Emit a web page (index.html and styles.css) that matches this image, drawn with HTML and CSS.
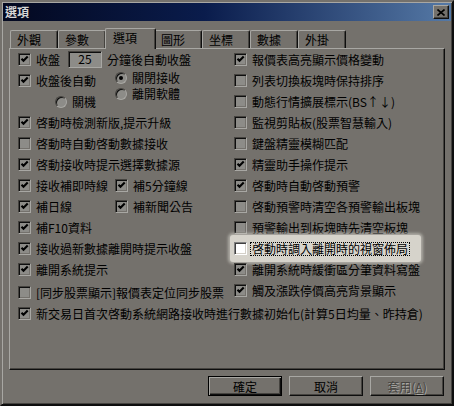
FILE: index.html
```html
<!DOCTYPE html>
<html lang="zh-Hant">
<head>
  <meta charset="UTF-8">
  <title>選項</title>
  <link rel="stylesheet" href="styles.css">
</head>
<body>
<div class="window">
  <div class="titlebar">
    <span class="title">選項</span>
    <span class="close">
      <svg width="8" height="7" viewBox="0 0 8 7"><path d="M0.5 0.5l7 6M7.5 0.5l-7 6" stroke="#000" stroke-width="1.6"/></svg>
    </span>
  </div>

  <div class="tabs">
    <div class="tab">外觀</div>
    <div class="tab">參數</div>
    <div class="tab active">選項</div>
    <div class="tab">圖形</div>
    <div class="tab">坐標</div>
    <div class="tab">數據</div>
    <div class="tab">外掛</div>
  </div>

  <div class="panel">
    <div class="columns">
      <div class="column">
        <div class="row">
          <span class="opt"><span class="cb on"><svg width="9" height="9" viewBox="0 0 9 9"><path d="M1.5 3.8l2 2 4.2-4.2" fill="none" stroke="#000" stroke-width="2.1"/></svg></span>收盤</span>
          <span class="edit">25</span>
          <span class="after-edit">分鐘後自動收盤</span>
        </div>
        <div class="group">
          <div class="group-left">
            <div class="row"><span class="opt"><span class="cb on"><svg width="9" height="9" viewBox="0 0 9 9"><path d="M1.5 3.8l2 2 4.2-4.2" fill="none" stroke="#000" stroke-width="2.1"/></svg></span>收盤後自動</span></div>
            <div class="row indent"><span class="opt"><span class="radio"></span>關機</span></div>
          </div>
          <div class="group-right">
            <div class="radio-row"><span class="opt"><span class="radio on"></span>關閉接收</span></div>
            <div class="radio-row"><span class="opt"><span class="radio"></span>離開軟體</span></div>
          </div>
        </div>
        <div class="row"><span class="opt"><span class="cb on"><svg width="9" height="9" viewBox="0 0 9 9"><path d="M1.5 3.8l2 2 4.2-4.2" fill="none" stroke="#000" stroke-width="2.1"/></svg></span>啓動時檢測新版,提示升級</span></div>
        <div class="row"><span class="opt"><span class="cb"></span>啓動時自動啓動數據接收</span></div>
        <div class="row"><span class="opt"><span class="cb on"><svg width="9" height="9" viewBox="0 0 9 9"><path d="M1.5 3.8l2 2 4.2-4.2" fill="none" stroke="#000" stroke-width="2.1"/></svg></span>啓動接收時提示選擇數據源</span></div>
        <div class="row">
          <span class="opt half"><span class="cb on"><svg width="9" height="9" viewBox="0 0 9 9"><path d="M1.5 3.8l2 2 4.2-4.2" fill="none" stroke="#000" stroke-width="2.1"/></svg></span>接收補即時線</span>
          <span class="opt"><span class="cb on"><svg width="9" height="9" viewBox="0 0 9 9"><path d="M1.5 3.8l2 2 4.2-4.2" fill="none" stroke="#000" stroke-width="2.1"/></svg></span>補5分鐘線</span>
        </div>
        <div class="row">
          <span class="opt half"><span class="cb on"><svg width="9" height="9" viewBox="0 0 9 9"><path d="M1.5 3.8l2 2 4.2-4.2" fill="none" stroke="#000" stroke-width="2.1"/></svg></span>補日線</span>
          <span class="opt"><span class="cb on"><svg width="9" height="9" viewBox="0 0 9 9"><path d="M1.5 3.8l2 2 4.2-4.2" fill="none" stroke="#000" stroke-width="2.1"/></svg></span>補新聞公告</span>
        </div>
        <div class="row"><span class="opt"><span class="cb on"><svg width="9" height="9" viewBox="0 0 9 9"><path d="M1.5 3.8l2 2 4.2-4.2" fill="none" stroke="#000" stroke-width="2.1"/></svg></span>補F10資料</span></div>
        <div class="row"><span class="opt"><span class="cb on"><svg width="9" height="9" viewBox="0 0 9 9"><path d="M1.5 3.8l2 2 4.2-4.2" fill="none" stroke="#000" stroke-width="2.1"/></svg></span>接收過新數據離開時提示收盤</span></div>
        <div class="row"><span class="opt"><span class="cb on"><svg width="9" height="9" viewBox="0 0 9 9"><path d="M1.5 3.8l2 2 4.2-4.2" fill="none" stroke="#000" stroke-width="2.1"/></svg></span>離開系統提示</span></div>
        <div class="row lower"><span class="opt"><span class="cb"></span>[同步股票顯示]報價表定位同步股票</span></div>
      </div>

      <div class="column">
        <div class="row"><span class="opt"><span class="cb on"><svg width="9" height="9" viewBox="0 0 9 9"><path d="M1.5 3.8l2 2 4.2-4.2" fill="none" stroke="#000" stroke-width="2.1"/></svg></span>報價表高亮顯示價格變動</span></div>
        <div class="row"><span class="opt"><span class="cb"></span>列表切換板塊時保持排序</span></div>
        <div class="row"><span class="opt"><span class="cb"></span>動態行情擴展標示(BS↑↓)</span></div>
        <div class="row"><span class="opt"><span class="cb"></span>監視剪貼板(股票智慧輸入)</span></div>
        <div class="row"><span class="opt"><span class="cb"></span>鍵盤精靈模糊匹配</span></div>
        <div class="row"><span class="opt"><span class="cb on"><svg width="9" height="9" viewBox="0 0 9 9"><path d="M1.5 3.8l2 2 4.2-4.2" fill="none" stroke="#000" stroke-width="2.1"/></svg></span>精靈助手操作提示</span></div>
        <div class="row"><span class="opt"><span class="cb on"><svg width="9" height="9" viewBox="0 0 9 9"><path d="M1.5 3.8l2 2 4.2-4.2" fill="none" stroke="#000" stroke-width="2.1"/></svg></span>啓動時自動啓動預警</span></div>
        <div class="row"><span class="opt"><span class="cb"></span>啓動預警時清空各預警輸出板塊</span></div>
        <div class="row"><span class="opt"><span class="cb"></span>預警輸出到板塊時先清空板塊</span></div>
        <div class="row"><span class="opt spot"><span class="cb lit"></span><span class="focus">啓動時調入離開時的視窗佈局</span></span></div>
        <div class="row"><span class="opt"><span class="cb on"><svg width="9" height="9" viewBox="0 0 9 9"><path d="M1.5 3.8l2 2 4.2-4.2" fill="none" stroke="#000" stroke-width="2.1"/></svg></span>離開系統時緩衝區分筆資料寫盤</span></div>
        <div class="row"><span class="opt"><span class="cb on"><svg width="9" height="9" viewBox="0 0 9 9"><path d="M1.5 3.8l2 2 4.2-4.2" fill="none" stroke="#000" stroke-width="2.1"/></svg></span>觸及漲跌停價高亮背景顯示</span></div>
      </div>
    </div>
    <div class="row"><span class="opt"><span class="cb on"><svg width="9" height="9" viewBox="0 0 9 9"><path d="M1.5 3.8l2 2 4.2-4.2" fill="none" stroke="#000" stroke-width="2.1"/></svg></span>新交易日首次啓動系統網路接收時進行數據初始化(計算5日均量、昨持倉)</span></div>
  </div>

  <div class="buttons">
    <button class="btn default">確定</button>
    <button class="btn">取消</button>
    <button class="btn" disabled>套用(<u>A</u>)</button>
  </div>
</div>
</body>
</html>
```

FILE: styles.css
```css
:root {
  --face: #74716c;
  --light: #a8a7a3;
  --shadow: #45433f;
  --dark: #0e0e0e;
  --well: #8d8c88;
  --spot: #d6d3cb;
}

* {
  margin: 0;
  padding: 0;
  box-sizing: border-box;
}

body {
  background: var(--face);
  font-family: "Noto Sans CJK TC", "Noto Sans", sans-serif;
  font-size: 12px;
  line-height: 14px;
  color: #000;
}

.window {
  width: 454px;
  height: 406px;
  background: var(--face);
  border: 2px solid;
  border-color: var(--face) var(--dark) var(--dark) var(--face);
  box-shadow: inset 1px 1px 0 var(--light), inset -1px -1px 0 var(--shadow);
  padding: 1px;
}

/* title bar */
.titlebar {
  height: 18px;
  display: flex;
  align-items: flex-start;
  justify-content: space-between;
  background: linear-gradient(to right, #03081f, #0a1c4c 45%, #5579a6);
  padding: 0 2px;
}

.title {
  color: #d6d6d6;
  font-weight: 700;
  font-size: 12px;
  line-height: 18px;
}

.close {
  width: 16px;
  height: 14px;
  margin-top: 2px;
  background: var(--face);
  border: 1px solid;
  border-color: var(--light) var(--dark) var(--dark) var(--light);
  box-shadow: inset -1px -1px 0 var(--shadow);
  display: flex;
  align-items: center;
  justify-content: center;
}

/* tabs */
.tabs {
  display: flex;
  align-items: flex-end;
  height: 20px;
  margin: 7px 6px 0;
  padding-left: 1px;
}

.tab {
  width: 48px;
  height: 18px;
  padding-left: 6px;
  line-height: 17px;
  border-left: 1px solid var(--light);
  border-top: 1px solid var(--light);
  border-right: 1px solid var(--dark);
  border-radius: 2px 2px 0 0;
  box-shadow: inset -1px 0 0 var(--shadow);
  background: var(--face);
}

.tab.active {
  width: 51px;
  height: 21px;
  margin: 0 -2px -1px -1px;
  padding-left: 7px;
  position: relative;
  z-index: 1;
}

/* page */
.panel {
  height: 322px;
  margin: 0 6px;
  padding: 1px 0 0 8px;
  border: 1px solid;
  border-color: var(--light) var(--dark) var(--dark) var(--light);
  box-shadow: inset -1px -1px 0 var(--shadow);
}

.columns {
  display: grid;
  grid-template-columns: 216px 1fr;
}

.row {
  display: flex;
  align-items: center;
  height: 21px;
  padding-bottom: 2px;
  white-space: nowrap;
}

.row.lower {
  margin-top: 2px;
}

.row.indent {
  padding-left: 37px;
}

.opt {
  display: flex;
  align-items: center;
  gap: 5px;
}

.opt.half {
  width: 97px;
}

.group {
  display: flex;
}

.group-left {
  width: 97px;
}

.group-right {
  margin-top: -1px;
}

.radio-row {
  height: 16px;
  display: flex;
  align-items: center;
}

/* controls */
.cb {
  width: 13px;
  height: 13px;
  flex: none;
  background: var(--well);
  border: 1px solid;
  border-color: var(--shadow) var(--light) var(--light) var(--shadow);
  box-shadow: inset 1px 1px 0 var(--dark), inset -1px -1px 0 var(--face);
  display: flex;
  align-items: center;
  justify-content: center;
}

.cb svg {
  display: block;
}

.cb.lit {
  background: #fff;
  border-color: #808080 #fff #fff #808080;
  box-shadow: inset 1px 1px 0 #404040, inset -1px -1px 0 #d4d0c8;
}

.radio {
  width: 12px;
  height: 12px;
  flex: none;
  border-radius: 50%;
  background: var(--well);
  border: 1px solid;
  border-color: var(--shadow) var(--light) var(--light) var(--shadow);
  box-shadow: inset 1px 1px 0 var(--dark);
  display: flex;
  align-items: center;
  justify-content: center;
}

.radio.on::after {
  content: "";
  width: 4px;
  height: 4px;
  border-radius: 50%;
  background: #000;
}

.edit {
  width: 34px;
  height: 17px;
  margin-left: 8px;
  margin-right: 5px;
  text-align: center;
  line-height: 14px;
  background: var(--well);
  border: 1px solid;
  border-color: var(--shadow) var(--light) var(--light) var(--shadow);
  box-shadow: inset 1px 1px 0 var(--dark);
}

/* spotlight on the focused option */
.spot {
  gap: 3px;
  background: var(--spot);
  padding: 7px 11px 6px 4px;
  margin: -7px -11px -6px -4px;
  border-radius: 3px;
  box-shadow: 0 0 3px 2px rgba(214, 211, 203, 0.6);
}

.focus {
  border: 1px dotted #000;
  padding: 0 1px;
  line-height: 12px;
}

/* buttons */
.buttons {
  display: flex;
  justify-content: flex-end;
  gap: 7px;
  margin: 6px 7px 0 0;
}

.btn {
  width: 74px;
  height: 20px;
  font-family: inherit;
  font-size: 12px;
  color: #000;
  background: var(--face);
  border: 1px solid;
  border-color: var(--light) var(--dark) var(--dark) var(--light);
  box-shadow: inset -1px -1px 0 var(--shadow);
}

.btn.default {
  border-color: #000;
  box-shadow: inset 1px 1px 0 var(--light), inset -1px -1px 0 var(--dark), inset -2px -2px 0 var(--shadow);
}

.btn:disabled {
  color: var(--shadow);
  text-shadow: 1px 1px 0 var(--light);
}
```
